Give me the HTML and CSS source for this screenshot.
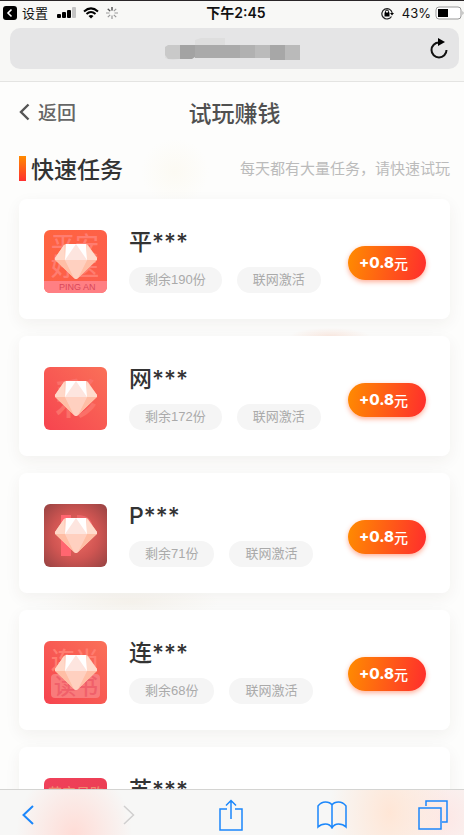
FILE: index.html
```html
<!DOCTYPE html>
<html lang="zh-CN">
<head>
<meta charset="utf-8">
<meta name="viewport" content="width=device-width, initial-scale=1">
<title>试玩赚钱</title>
<link rel="stylesheet" href="styles.css">
</head>
<body>
<svg class="defs" aria-hidden="true">
  <defs>
    <linearGradient id="red" x1="1" y1="0" x2="0" y2="1"><stop offset="0" stop-color="#fa7058"/><stop offset="1" stop-color="#f6444f"/></linearGradient>
    <linearGradient id="orange" x1="0" y1="0" x2="1" y2="1"><stop offset="0" stop-color="#ff643f"/><stop offset="1" stop-color="#fc5d50"/></linearGradient>
    <radialGradient id="dark" r=".75"><stop offset="0" stop-color="#f46d65"/><stop offset=".5" stop-color="#cf5552"/><stop offset="1" stop-color="#8e4040"/></radialGradient>
    <linearGradient id="rose" x1="0" y1="0" x2="1" y2="1"><stop offset="0" stop-color="#f0415a"/><stop offset="1" stop-color="#e93c50"/></linearGradient>
    <g id="gem">
      <path d="M22 14H42Q43 14 44 15L53 28Q53 29 52.500 30L34 48Q32 50 30 48L11.500 30Q10.500 29 11 28L20 15Q21 14 22 14Z" fill="#ffcbb9"/>
      <path d="M22 14H42L43 30H21Z" fill="#fff"/>
      <path d="M32 14L43 30H21Z" fill="#fde5df"/>
      <path d="M20 15L21 30H11V28Z" fill="#ffd8c8"/>
      <path d="M43 15L53 28V30H43Z" fill="#ffdccd"/>
      <path d="M11 30H21L30 48ZM43 30H53L34 48Z" fill="#ffbea5"/>
      <path d="M21 30H43L34 48Q32 50 30 48Z" fill="#ffd0c0"/>
    </g>
  </defs>
</svg>
<div class="phone">
  <header class="browser">
    <div class="status">
      <div class="status-side">
        <svg width="14" height="14" viewBox="0 0 14 14"><rect width="14" height="14" rx="3"/><path d="M8.500 3.500L5 7l3.500 3.500" fill="none" stroke="#fff" stroke-width="1.600"/></svg>
        <span class="settings">设置</span>
        <svg class="signal" width="19" height="12" viewBox="0 0 19 12"><rect y="7" width="4" height="4" rx="1"/><rect x="5" y="5" width="4" height="6" rx="1"/><rect x="10" y="3" width="4" height="8" rx="1"/><rect x="15" width="4" height="11" rx="1" fill="#c4c4c4"/></svg>
        <svg width="16" height="12" viewBox="0 0 16 12" fill="none" stroke="#000" stroke-width="2"><path d="M1 4.500Q8-1.800 15 4.500M3.500 7Q8 3 12.500 7"/><path d="M5.500 9Q8 7 10.500 9L8 11.500Z" fill="#000" stroke="none"/></svg>
        <svg width="12" height="12" viewBox="0 0 12 12" stroke="#999" stroke-width="1.200"><path d="M6 0v3.500M6 8.500V12M0 6h3.500M8.500 6H12M1.800 1.800l2.400 2.400M7.800 7.800l2.400 2.400M1.800 10.200l2.400-2.400M7.800 4.200l2.400-2.400"/><path d="M6 0v3.500M1.800 1.800l2.400 2.400" stroke="#555"/></svg>
      </div>
      <time class="time">下午2:45</time>
      <div class="status-side status-end">
        <svg width="13" height="13" viewBox="0 0 13 13"><path d="M10.500 9.500A5.200 5.200 0 1 1 11.200 6" fill="none" stroke="#222" stroke-width="1.200"/><path d="M9 6h4l-2 2.500Z"/><rect x="3.500" y="5.500" width="5" height="4"/><path d="M4.500 6V4.500a1.500 1.500 0 0 1 3 0V6" fill="none" stroke="#000"/></svg>
        <span class="percent">43%</span>
        <svg width="29" height="14" viewBox="0 0 29 14"><rect x="1" y="1" width="25" height="12" rx="3" fill="#fff" stroke="#999"/><rect x="3" y="3" width="10" height="8"/><path d="M27.500 5q2 2 0 4Z" fill="#999"/></svg>
      </div>
    </div>
    <div class="address">
      <svg class="mosaic" width="136" height="22" viewBox="0 0 136 22" aria-hidden="true"><path d="M30 2L36 0H60V8H30Z" fill="#dedede"/><path d="M0 14V20Q8 24 22 19L30 17H54V20Z" fill="#ddd"/><path d="M0 9L3 7H15V21H3L0 17Z" fill="#c9c9c9"/><path d="M15 7H30V19L27 21H15Z" fill="#a3a3a3"/><rect x="30" y="7" width="45" height="13" fill="#aaa"/><rect x="75" y="7" width="15" height="13" fill="#b1b1b1"/><rect x="90" y="7" width="15" height="13" fill="#bbb"/><rect x="105" y="7" width="15" height="15" fill="#a7a7a7"/><rect x="120" y="7" width="15" height="15" fill="#bababa"/></svg>
      <button class="reload" aria-label="刷新"><svg width="20" height="22" viewBox="0 0 20 22"><path d="M10 4.500A7.500 7.500 0 1 0 17.500 12" fill="none" stroke="#111" stroke-width="2"/><path d="M9 0V8L16 4Z"/></svg></button>
    </div>
  </header>

  <main class="page">
    <nav class="nav">
      <a class="back" href="#"><svg width="11" height="18" viewBox="0 0 11 18"><path d="M9.500 1.500L2 9l7.500 7.500" fill="none" stroke="#555" stroke-width="2.400"/></svg>返回</a>
      <h1 class="title">试玩赚钱</h1>
    </nav>
    <div class="section-head">
      <h2 class="section-title">快速任务</h2>
      <p class="hint">每天都有大量任务，请快速试玩</p>
    </div>
    <ul class="tasks">
      <li class="card">
        <svg class="icon" viewBox="0 0 63 63"><rect width="63" height="63" fill="url(#orange)"/><g class="mark" font-size="24"><text x="7" y="24">平安</text><text x="7" y="45">好医</text></g><rect y="51" width="63" height="12" fill="#ff7f83"/><text class="latin" x="15" y="60">PING AN</text><use href="#gem"/></svg>
        <div class="info"><h3 class="name">平***</h3><div class="tags"><span class="tag">剩余190份</span><span class="tag">联网激活</span></div></div>
        <button class="reward">+0.8<span class="unit">元</span></button>
      </li>
      <li class="card">
        <svg class="icon" viewBox="0 0 63 63"><rect width="63" height="63" fill="url(#red)"/><text class="mark soft" font-size="42" x="11" y="47">彩</text><use href="#gem"/></svg>
        <div class="info"><h3 class="name">网***</h3><div class="tags"><span class="tag">剩余172份</span><span class="tag">联网激活</span></div></div>
        <button class="reward">+0.8<span class="unit">元</span></button>
      </li>
      <li class="card">
        <svg class="icon" viewBox="0 0 63 63"><rect width="63" height="63" fill="url(#dark)"/><path d="M17 11H27V52H17Z" fill="#ff6670"/><path d="M33 11Q49 11 49 26T33 41Z" fill="#ec6669"/><use href="#gem"/></svg>
        <div class="info"><h3 class="name">P***</h3><div class="tags"><span class="tag">剩余71份</span><span class="tag">联网激活</span></div></div>
        <button class="reward">+0.8<span class="unit">元</span></button>
      </li>
      <li class="card">
        <svg class="icon" viewBox="0 0 63 63"><rect width="63" height="63" fill="url(#red)"/><text class="mark" font-size="24" x="7" y="28">连尚</text><rect x="7" y="33" width="49" height="24" rx="4" fill="#f97b7b"/><text class="cutout" font-size="22" x="10" y="53">读书</text><use href="#gem"/></svg>
        <div class="info"><h3 class="name">连***</h3><div class="tags"><span class="tag">剩余68份</span><span class="tag">联网激活</span></div></div>
        <button class="reward">+0.8<span class="unit">元</span></button>
      </li>
      <li class="card">
        <svg class="icon" viewBox="0 0 63 63"><rect width="63" height="63" fill="url(#rose)"/><text class="mark gold" font-size="14" x="4" y="20">苏宁易购</text><use href="#gem"/></svg>
        <div class="info"><h3 class="name">苏***</h3><div class="tags"><span class="tag">剩余60份</span><span class="tag">联网激活</span></div></div>
        <button class="reward">+0.8<span class="unit">元</span></button>
      </li>
    </ul>
  </main>

  <footer class="toolbar">
    <button class="tool" aria-label="后退"><svg width="12" height="20" viewBox="0 0 12 20"><path d="M11 1L1.500 10 11 19"/></svg></button>
    <button class="tool off" aria-label="前进" disabled><svg width="12" height="20" viewBox="0 0 12 20"><path d="M1 1l9.500 9L1 19"/></svg></button>
    <button class="tool" aria-label="分享"><svg width="24" height="32" viewBox="0 0 24 32"><path d="M8 10H1V31H23V10H16M12 20V2M7 6.500L12 1.500 17 6.500"/></svg></button>
    <button class="tool" aria-label="书签"><svg width="30" height="28" viewBox="0 0 30 28"><path d="M15 27V4Q13 1 8.500 1T1 5V26Q4 23 8.500 23T15 27Q17 23 21.500 23T29 26V5Q26 1 21.500 1T15 4"/></svg></button>
    <button class="tool" aria-label="标签页"><svg width="30" height="30" viewBox="0 0 30 30"><path d="M1 8H23V29H1ZM8 6V1H29V22H24"/></svg></button>
  </footer>
</div>
</body>
</html>
```
FILE: styles.css
```css
* { box-sizing: border-box; }

body, h1, h2, h3, p, ul { margin: 0; padding: 0; }

body {
  font-family: "Noto Sans CJK SC", sans-serif;
  color: #333;
  background: #fdfdfc;
}

button {
  padding: 0;
  border: 0;
  background: none;
  font: inherit;
}

svg { display: block; flex: none; }

.defs { position: absolute; width: 0; height: 0; }

.phone {
  display: flex;
  flex-direction: column;
  height: 100vh;
  overflow: hidden;
}

/* Browser chrome */
.browser {
  flex: none;
  padding: 2px 5px 12px 10px;
  background: #f8f8f6;
  border-top: 1px solid #2a2628;
  border-bottom: 1px solid #e4e4e2;
}

.status {
  display: grid;
  grid-template-columns: 1fr auto 1fr;
  align-items: center;
  height: 20px;
  margin: 0 -5px 5px -7px;
  font-family: Inter, "Noto Sans CJK SC", sans-serif;
  font-size: 13px;
  line-height: 20px;
  color: #111;
}

.status-side { display: flex; align-items: center; gap: 7px; }
.status-end { justify-content: flex-end; gap: 4px; }
.settings { margin: 0 2px 0 -2px; }
.time { padding-left: 5px; font-weight: 600; font-size: 14px; }
.percent { margin-left: 4px; }

.address {
  display: grid;
  grid-template-columns: 1fr auto 1fr;
  align-items: center;
  height: 41px;
  padding: 0 10px;
  background: #e5e5e6;
  border-radius: 10px;
}

.mosaic { grid-column: 2; margin-right: 4px; }
.reload { justify-self: end; }

/* Page */
.page {
  flex: 1;
  min-height: 0;
  overflow: hidden;
  padding: 13px 14px 0 19px;
  background:
    radial-gradient(circle at 175px 90px, #fcfaf3, transparent 34px),
    radial-gradient(ellipse 40px 8px at 330px 254px, #fcebe3, transparent),
    radial-gradient(ellipse 90px 18px at 130px 520px, #f8f5ef, transparent),
    #fdfdfc;
}

.nav {
  display: grid;
  grid-template-columns: 1fr auto 1fr;
  align-items: center;
  height: 34px;
}

.back {
  display: flex;
  align-items: center;
  gap: 8px;
  font-size: 19px;
  line-height: 28px;
  font-weight: 500;
  color: #666;
  text-decoration: none;
}

.title {
  font-size: 23px;
  font-weight: 500;
  line-height: 34px;
  color: #505050;
}

.section-head {
  display: flex;
  align-items: center;
  justify-content: space-between;
  height: 34px;
  margin: 22px 0 14px;
}

.section-title {
  display: flex;
  align-items: center;
  gap: 5px;
  font-size: 23px;
  font-weight: 500;
  line-height: 34px;
}

.section-title::before {
  content: "";
  width: 7px;
  height: 25px;
  background: linear-gradient(#ff8a00, #ff3030);
}

.hint { font-size: 15px; line-height: 22px; color: #bbb; }

.tasks {
  display: flex;
  flex-direction: column;
  gap: 17px;
  list-style: none;
}

.card {
  display: flex;
  align-items: center;
  padding: 27px 24px 26px 25px;
  background: #fff;
  border-radius: 8px;
  box-shadow: 0 5px 16px rgba(60, 50, 30, .06);
}

.icon {
  width: 63px;
  height: 63px;
  margin: 4px 22px 0 0;
  border-radius: 6px;
}

.mark { fill: #ff7d70; font-weight: 500; }
.soft { fill: #fb7068; }
.gold { fill: #ef8a70; }
.cutout { fill: #f0606a; font-weight: 500; }
.latin { font: 9px "Liberation Sans", sans-serif; fill: #d9485a; }

.info { flex: 1; }

.name {
  margin-bottom: 9px;
  font-family: Inter, "Noto Sans CJK SC", sans-serif;
  font-size: 23px;
  font-weight: 500;
  line-height: 32px;
}

.tags { display: flex; gap: 15px; }

.tag {
  padding: 0 16px;
  border-radius: 13px;
  background: #f5f5f5;
  font-family: "Liberation Sans", "Noto Sans CJK SC", sans-serif;
  font-size: 13px;
  line-height: 26px;
  color: #aaa;
}

.reward {
  display: flex;
  align-items: center;
  width: 78px;
  height: 34px;
  margin-top: 6px;
  padding-left: 11px;
  border-radius: 17px;
  background: linear-gradient(100deg, #ff8c00, #ff2d2d);
  box-shadow: 0 2px 5px rgba(255, 80, 30, .45);
  font-family: Inter, sans-serif;
  font-size: 15px;
  font-weight: 800;
  line-height: 34px;
  color: #fff;
}

.unit { font-family: "Noto Sans CJK SC", sans-serif; font-size: 14px; font-weight: 500; line-height: 32px; }

/* Bottom toolbar */
.toolbar {
  display: flex;
  align-items: center;
  justify-content: space-between;
  flex: none;
  height: 46px;
  padding: 5px 16px 0 13px;
  border-top: 1px solid #d4d4d2;
  background:
    radial-gradient(ellipse 58px 70px at 16% 100%, #ffdcd6, transparent),
    radial-gradient(ellipse 60px 90px at 84% 50%, #ffe6d6, transparent),
    radial-gradient(ellipse 50px 60px at 96% 60%, #fde7e5, transparent),
    #f7f7f6;
}

.tool { display: flex; justify-content: center; width: 30px; }
.tool svg { fill: none; stroke: #1b87fb; stroke-width: 1.500; }
.tool:first-child svg { stroke-width: 2; }
.off svg { stroke: #d0cfcf; }
```
